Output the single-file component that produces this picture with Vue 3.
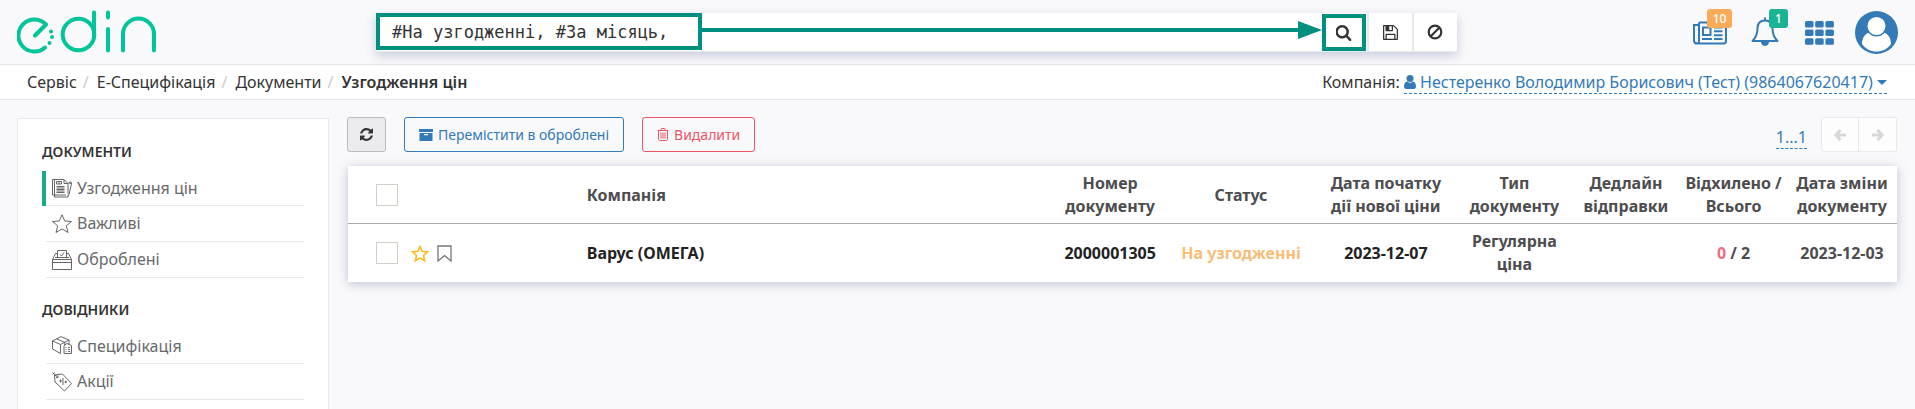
<script setup>
import { ref } from 'vue'

const query = ref('#На узгодженні, #За місяць,')
const crumbs = ['Сервіс', 'Е-Специфікація', 'Документи']
const menus = [
  {
    title: 'Документи',
    items: [
      { label: 'Узгодження цін', icon: 'doc', active: true },
      { label: 'Важливі', icon: 'star' },
      { label: 'Оброблені', icon: 'box' },
    ],
  },
  {
    title: 'Довідники',
    items: [
      { label: 'Специфікація', icon: 'package' },
      { label: 'Акції', icon: 'tag' },
    ],
  },
]
const icons = {
  doc: 'M.5 1.5H12l4 4V16M.5 1.5v15.500h13.500M2.500 1.500V19H16V17M12 1.500v4h4M4.500 3.500h5v2.500h-5zM7 3.500V6M4.500 8.500h8M4.500 10h8M4.500 11.500h8M4.500 13h8M4.500 14.500h8M16.500 5l3 .5-2.500 11-1 1.500M19.500 5.500l-.5-1.500-2 .5',
  star: 'M10 .8l2.700 6.200 6.800.5-5.200 4.300 1.700 6.700-6-3.600-6 3.600 1.700-6.700L.5 7.500 7.300 7z',
  box: 'M.5 9.500h19v10H.5zM.5 9.500L3.500 3.500h2M14.500 3.500h2l3 6M5.500 7.500v-7h9v7M3 7.500h14M.5 12.500h19M8 4.500l1.500 1.500L12 2.500',
  package: 'M.5 5L9 .6 17 4M.5 5l8 3.500L17 4M.5 5v8l8 4.500v-9M4.500 2.800l8.300 3.500v3M12 9.500l3-2 4.500 2v8h-7.500zM13.500 11.500h1M16 11.500h2M13.500 13.500h1M16 13.500h2M13.500 15.500h1M16 15.500h2M17 4v4',
  tag: 'M2.500 3l8-1 9 9.500-7 7.500-9.500-9zM.5.5l5 4.500M.5 2.500l2-2M4 5.500h2v-2M7.500 9h2.500M8.500 7.500v3M11 6v7M12.500 10H15M13.700 8.700v2.600',
}
const columns = ['Номер документу', 'Статус', 'Дата початку дії нової ціни', 'Тип документу', 'Дедлайн відправки', 'Відхилено / Всього', 'Дата зміни документу']
</script>

<template>
  <div class="page">
    <header class="top">
      <a class="logo" href="#" aria-label="edin">
        <svg width="140" height="44" viewBox="0 0 140 44" fill="none" stroke="#00c49a" stroke-width="4" stroke-linecap="round">
          <path d="M18 25.500L29 14.500A16 16 0 1 0 28 37.500" stroke-linejoin="round" />
          <circle cx="61.500" cy="24.500" r="15.800" />
          <path d="M77 2.500V25M91 2.500v5M91 19v21.500M106 40.500V24a15.500 15.500 0 0 1 31 0v16.500" />
          <g fill="#00c49a" stroke="none">
            <circle cx="34" cy="21.500" r="2" />
            <circle cx="35" cy="27" r="2" />
            <circle cx="32.500" cy="33" r="2" />
          </g>
        </svg>
      </a>
      <form class="search" @submit.prevent>
        <input v-model="query" class="query" type="text" aria-label="Пошук" />
        <div class="arrow"></div>
        <button class="tool find" type="submit" aria-label="Знайти">
          <svg width="16" height="16" viewBox="128 128 1664 1664" fill="currentColor"><path d="M1216 832q0-185-131.500-316.500t-316.500-131.500-316.500 131.500-131.500 316.500 131.500 316.500 316.500 131.500 316.500-131.500 131.500-316.500zm512 832q0 52-38 90t-90 38q-54 0-90-38l-343-342q-179 124-399 124-143 0-273.500-55.500t-225-150-150-225-55.500-273.500 55.500-273.500 150-225 225-150 273.500-55.500 273.500 55.500 225 150 150 225 55.500 273.500q0 220-124 399l343 343q37 37 37 90z" /></svg>
        </button>
        <button class="tool" type="button" aria-label="Зберегти">
          <svg width="15" height="15" viewBox="128 128 1536 1536" fill="currentColor"><path d="M512 1536h768v-384h-768v384zm896 0h128v-896q0-14-10-38.500t-20-34.500l-281-281q-10-10-34-20t-39-10v416q0 40-28 68t-68 28h-576q-40 0-68-28t-28-68v-416h-128v1280h128v-416q0-40 28-68t68-28h832q40 0 68 28t28 68v416zm-384-928v-320q0-13-9.500-22.500t-22.500-9.500h-192q-13 0-22.500 9.500t-9.500 22.500v320q0 13 9.500 22.500t22.500 9.500h192q13 0 22.500-9.500t9.500-22.500zm640 32v928q0 40-28 68t-68 28h-1344q-40 0-68-28t-28-68v-1344q0-40 28-68t68-28h928q40 0 88 20t76 48l280 280q28 28 48 76t20 88z" /></svg>
        </button>
        <button class="tool" type="button" aria-label="Очистити">
          <svg width="16" height="16" viewBox="0 0 16 16" fill="none" stroke="currentColor" stroke-width="2.200"><circle cx="8" cy="8" r="6.300" /><path d="M3.500 12.500l9-9" /></svg>
        </button>
      </form>
      <nav class="actions">
        <a class="news" href="#" aria-label="Новини">
          <svg width="34" height="24" viewBox="0 0 34 24" fill="none" stroke="currentColor" stroke-width="2">
            <path d="M6 1.500h25a2 2 0 0 1 2 2v16.500a2.500 2.500 0 0 1-2.500 2.500H4A2.700 2.700 0 0 1 1 20V4h5M6 1.500V20a2 2 0 0 1-3 2" />
            <path d="M10 6.500h7.500v7.500H10zM9 18h10M21 6.500h8.500M21 10.300h8.500M21 14.200h8.500M21 18h8.500" />
          </svg>
          <span class="badge orange">10</span>
        </a>
        <a class="bell" href="#" aria-label="Сповіщення">
          <svg width="28" height="30" viewBox="0 0 28 30" fill="none" stroke="currentColor" stroke-width="2">
            <path d="M14 3.500c-5 0-7.500 3-7.500 8 0 6-1.500 9-5 12.500h25c-3.500-3.500-5-6.500-5-12.500 0-5-2.500-8-7.500-8zM14 .5v3" stroke-linejoin="round" />
            <path d="M10.500 25a3.500 3.500 0 0 0 7 0z" fill="currentColor" stroke-width="1" />
          </svg>
          <span class="badge green">1</span>
        </a>
        <a class="apps" href="#" aria-label="Сервіси">
          <svg width="29" height="24" viewBox="0 0 29 24" fill="currentColor">
            <template v-for="r in 3" :key="r">
              <rect v-for="c in 3" :key="c" :x="(c - 1) * 10.200" :y="(r - 1) * 8.600" width="8.500" height="6.500" rx="1.500" />
            </template>
          </svg>
        </a>
        <a class="user" href="#" aria-label="Профіль">
          <svg width="43" height="43" viewBox="0 0 43 43">
            <circle cx="21.500" cy="21.500" r="21.500" fill="#337ab7" />
            <path d="M7 33c0-6 3-10 7-11.500a11 11 0 0 0 15 0c4 1.500 7 5.500 7 11.500-3.500 5-8.500 7.500-14.500 7.500S10.500 38 7 33z" fill="#fff" />
            <circle cx="21.500" cy="15" r="9.800" fill="#fff" stroke="#337ab7" stroke-width="1.500" />
          </svg>
        </a>
      </nav>
    </header>

    <div class="pathbar">
      <ol class="crumbs">
        <li v-for="c in crumbs" :key="c"><a href="#">{{ c }}</a></li>
        <li class="current">Узгодження цін</li>
      </ol>
      <div class="company">
        Компанія:
        <a href="#"><svg class="person" width="12" height="14" viewBox="0 0 12 14" fill="currentColor"><circle cx="6" cy="3.500" r="3.500" /><path d="M3 6.500Q6 9 9 6.500c2 .3 3 2.500 3 5 0 1.500-1 2.500-2 2.500H2c-1 0-2-1-2-2.500 0-2.500 1-4.700 3-5z" /></svg> Нестеренко Володимир Борисович (Тест) (9864067620417) <svg class="caret" width="10" height="5" viewBox="0 0 10 5" fill="currentColor"><path d="M0 0h10L5 5z" /></svg></a>
      </div>
    </div>

    <div class="body">
      <aside class="side">
        <section v-for="m in menus" :key="m.title">
          <h2>{{ m.title }}</h2>
          <ul>
            <li v-for="i in m.items" :key="i.label" :class="{ active: i.active }">
              <a href="#">
                <svg width="20" height="20" viewBox="0 0 20 20" fill="none" stroke="#555" stroke-width="0.900"><path :d="icons[i.icon]" /></svg>
                <span>{{ i.label }}</span>
              </a>
            </li>
          </ul>
        </section>
      </aside>

      <main class="main">
        <div class="toolbar">
          <button class="btn refresh" type="button" aria-label="Оновити">
            <svg width="13" height="13" viewBox="128 128 1536 1536" fill="currentColor"><path d="M1639 1056q0 5-1 7-64 268-268 434.500t-478 166.500q-146 0-282.500-55t-243.500-157l-129 129q-19 19-45 19t-45-19-19-45v-448q0-26 19-45t45-19h448q26 0 45 19t19 45-19 45l-137 137q71 66 161 102t187 36q134 0 250-65t186-179q11-17 53-117 8-23 30-23h192q13 0 22.500 9.500t9.500 22.500zm25-800v448q0 26-19 45t-45 19h-448q-26 0-45-19t-19-45 19-45l138-138q-148-137-349-137-134 0-250 65t-186 179q-11 17-53 117-8 23-30 23h-199q-13 0-22.500-9.500t-9.500-22.500v-7q65-268 270-434.500t480-166.500q146 0 284 55.500t245 156.500l130-129q19-19 45-19t45 19 19 45z" /></svg>
          </button>
          <button class="btn move" type="button">
            <svg width="14" height="12" viewBox="0 0 14 12" fill="currentColor"><path d="M0 0h14v3H0zM.5 4h13v8H.5zM5 5v1.200h4V5z" fill-rule="evenodd" /></svg>
            Перемістити в оброблені
          </button>
          <button class="btn delete" type="button">
            <svg width="12" height="13" viewBox="0 0 12 13" fill="none" stroke="currentColor"><path d="M.5 2.500h11M3.500 2.500l1-2h3l1 2M1.500 2.500v9l1 1h7l1-1v-9M4 4.500v6M6 4.500v6M8 4.500v6" /></svg>
            Видалити
          </button>
          <div class="pager">
            <a class="range" href="#">1...1</a>
            <div class="pages">
              <button type="button" disabled aria-label="Назад"><svg width="12" height="12" viewBox="0 0 12 12" fill="none" stroke="currentColor" stroke-width="3"><path d="M6.500 1L1.800 6l4.700 5M2 6h10" /></svg></button>
              <button type="button" disabled aria-label="Вперед"><svg width="12" height="12" viewBox="0 0 12 12" fill="none" stroke="currentColor" stroke-width="3"><path d="M5.500 1l4.700 5-4.700 5M10 6H0" /></svg></button>
            </div>
          </div>
        </div>

        <div class="grid">
          <table>
            <colgroup>
              <col class="c-check" /><col class="c-name" /><col class="c-num" /><col class="c-status" /><col class="c-start" /><col class="c-type" /><col class="c-dead" /><col class="c-total" /><col class="c-date" />
            </colgroup>
            <thead>
              <tr>
                <th class="check"><div class="marks"><input type="checkbox" aria-label="Вибрати всі" /></div></th>
                <th class="name">Компанія</th>
                <th v-for="c in columns" :key="c">{{ c }}</th>
              </tr>
            </thead>
            <tbody>
              <tr>
                <td class="check">
                  <div class="marks">
                    <input type="checkbox" aria-label="Вибрати документ" />
                    <svg class="fav" width="18" height="17" viewBox="0 0 18 17" fill="none" stroke="#fdb813" stroke-width="1.500"><path d="M9 1.500l2.200 4.800 5.300.6-4 3.500 1.200 5.300L9 13l-4.700 2.700 1.200-5.300-4-3.500 5.300-.6z" /></svg>
                    <svg width="15" height="17" viewBox="0 0 15 17" fill="none" stroke="#777" stroke-width="1.300"><path d="M1 1h13v15l-6.500-5.500L1 16z" /></svg>
                  </div>
                </td>
                <td class="name dark">Варус (ОМЕГА)</td>
                <td class="dark">2000001305</td>
                <td class="status">На узгодженні</td>
                <td class="dark">2023-12-07</td>
                <td>Регулярна ціна</td>
                <td></td>
                <td><span class="rejected">0</span> / 2</td>
                <td>2023-12-03</td>
              </tr>
            </tbody>
          </table>
        </div>
      </main>
    </div>
  </div>
</template>

<style>
body { background: #f9f9fb; }
</style>

<style scoped>
.page { font: 16px/23px "Noto Sans", "Open Sans", sans-serif; color: #333; min-height: 100vh; display: flex; flex-direction: column; overflow: hidden; }
.page, .page * { box-sizing: border-box; }
a { color: inherit; text-decoration: none; }
button { font: inherit; color: inherit; cursor: pointer; }
svg { display: block; flex: none; }

.top { height: 65px; flex: none; border-bottom: 1px solid #e3e6ea; display: grid; grid-template-columns: 359px minmax(0, 1080fr) minmax(280px, 441fr); align-items: start; padding: 0 17px; }
.logo { padding-top: 10px; width: 140px; }
.search { margin-top: 13px; height: 39px; display: flex; background: #fff; border-bottom: 1px solid #e7eaec; box-shadow: 0 4px 10px rgba(90, 100, 150, .3); }
.query { width: 326px; height: 37px; flex: none; border: 4px solid #009080; border-radius: 0; outline: 0; padding: 0 12px; background: #fff; font: 17px "DejaVu Sans Mono", monospace; color: #333; }
.arrow { flex: 1; height: 34px; display: flex; align-items: center; }
.arrow::before { content: ""; flex: 1; height: 4px; background: #009080; }
.arrow::after { content: ""; border: 9px solid transparent; border-left: 24px solid #009080; border-right: 0; }
.tool { width: 45px; flex: none; display: flex; align-items: center; justify-content: center; border: 0; border-left: 2px solid #e7eaec; padding: 0; background: #fff; }
.find { height: 37px; width: 44px; margin: 1px 1px 0 0; border: 4px solid #009080; }
.actions { display: flex; justify-content: flex-end; align-items: flex-start; color: #337ab7; }
.actions a { position: relative; }
.news { margin: 21px 24px 0 0; }
.bell { margin: 17px 26px 0 0; }
.apps { margin: 21px 21px 0 0; }
.user { margin: 11px 0 0; }
.badge { position: absolute; height: 19px; border-radius: 3px; color: #fff; font-size: 12px; line-height: 19px; font-weight: 500; text-align: center; }
.orange { width: 25px; left: 14px; top: -12px; background: #f8ac59; }
.green { width: 19px; left: 18px; top: -8px; background: #1ab394; }

.pathbar { background: #fff; border-bottom: 1px solid #e3e6ea; height: 35px; flex: none; display: flex; justify-content: space-between; align-items: center; padding: 0 28px 0 27px; }
.crumbs { display: flex; list-style: none; margin: 0; padding: 0; }
.crumbs li + li::before { content: "/"; color: #ccc; padding: 0 8px 0 6px; font-weight: 400; }
.current { font-weight: 600; }
.company a { color: #337ab7; display: inline-block; line-height: 22px; border-bottom: 1px dashed #337ab7; }
.company svg { display: inline-block; }
.caret { vertical-align: 3px; }
.person { vertical-align: -1px; }

.body { flex: 1; display: flex; align-items: stretch; gap: 18px; padding: 17px 18px 0 17px; }
.side { width: 312px; flex: none; background: #fff; border: 1px solid #e7e8f6; border-bottom: 0; padding: 21px 24px 0; margin-top: 1px; }
.side h2 { font-size: 14px; line-height: 23px; font-weight: 600; text-transform: uppercase; margin: 0; }
.side ul { list-style: none; margin: 8px 0 20px; padding: 0; }
.side li { border-left: 4px solid transparent; }
.side li.active { border-color: #1aab8b; }
.side li a { height: 35px; display: flex; align-items: center; gap: 5px; padding-left: 6px; border-bottom: 1px solid #e7eaec; color: #676a6c; }
.side li + li a { height: 36px; }

.main { flex: 1; min-width: 0; }
.toolbar { display: flex; margin-bottom: 14px; }
.btn { height: 35px; display: flex; align-items: center; gap: 5px; border: 1px solid; border-radius: 3px; background: transparent; font-size: 14px; padding: 0 14px; }
.refresh { width: 39px; justify-content: center; padding: 0; background: #ebebed; border-color: #bbb; }
.move { margin: 0 18px; color: #337ab7; }
.delete { color: #ed5565; }
.pager { margin-left: auto; display: flex; }
.range { color: #337ab7; border-bottom: 1px dashed; height: 23px; margin: 9px 14px 0 0; }
.pages { display: flex; }
.pages button { width: 38px; height: 35px; display: flex; align-items: center; justify-content: center; border: 1px solid #e7eaec; border-radius: 3px 0 0 3px; background: #fdfdfd; color: #d8d8d8; padding: 0; }
.pages button + button { border-left: 0; border-radius: 0 3px 3px 0; }

.grid { padding-left: 1px; }
table { width: 100%; table-layout: fixed; border-collapse: collapse; background: #fff; box-shadow: 0 2px 10px rgba(80, 95, 135, .35); }
.c-check { width: 14.900%; }
.c-num { width: 7.400%; }
.c-status { width: 9.500%; }
.c-start { width: 9.200%; }
.c-type { width: 7.400%; }
.c-dead { width: 7%; }
.c-total { width: 6.900%; }
.c-date { width: 7.100%; }
th, td { height: 57px; padding: 6px 5px 5px; font-weight: 700; text-align: center; vertical-align: middle; color: #4d4d4f; }
td { height: 58px; }
th { border-bottom: 1px solid #aaa; }
.name { text-align: left; padding-left: 8px; }
.check { padding-left: 28px; }
.dark { color: #222; }
.status { color: #f9bd7a; }
.rejected { color: #ee6d7c; }
.marks { display: flex; align-items: center; }
.marks input { appearance: none; width: 22px; height: 22px; margin: 0; border: 1px solid #d2cec6; background: #fff; }
.fav { margin: 0 8px 0 13px; }
</style>
